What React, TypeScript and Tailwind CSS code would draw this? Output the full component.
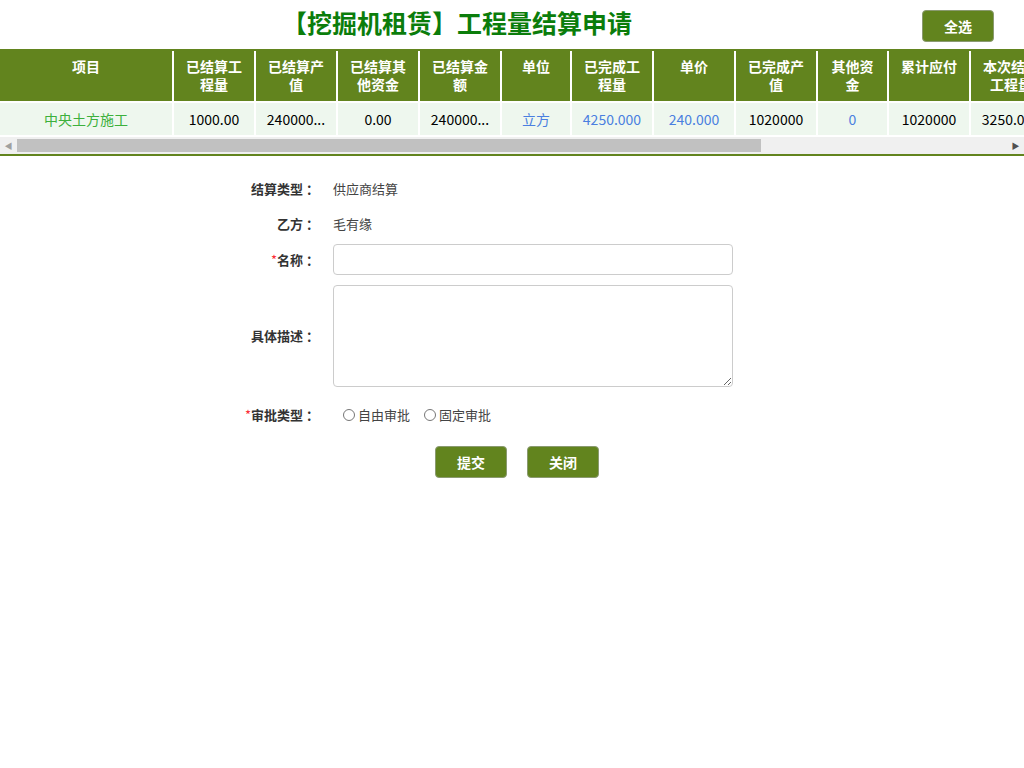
const cols: { h: string[]; w: number; v: string; c: string }[] = [
  { h: ["项目"], w: 172, v: "中央土方施工", c: "text-[#3cb03c]" },
  { h: ["已结算工", "程量"], w: 80, v: "1000.00", c: "text-black" },
  { h: ["已结算产", "值"], w: 80, v: "240000...", c: "text-black" },
  { h: ["已结算其", "他资金"], w: 80, v: "0.00", c: "text-black" },
  { h: ["已结算金", "额"], w: 80, v: "240000...", c: "text-black" },
  { h: ["单位"], w: 68, v: "立方", c: "text-[#4a7fe0]" },
  { h: ["已完成工", "程量"], w: 80, v: "4250.000", c: "text-[#4a7fe0]" },
  { h: ["单价"], w: 80, v: "240.000", c: "text-[#4a7fe0]" },
  { h: ["已完成产", "值"], w: 80, v: "1020000", c: "text-black" },
  { h: ["其他资", "金"], w: 69, v: "0", c: "text-[#4a7fe0]" },
  { h: ["累计应付"], w: 80, v: "1020000", c: "text-black" },
  { h: ["本次结算", "工程量"], w: 80, v: "3250.000", c: "text-black" },
  { h: ["本次结算", "产值"], w: 80, v: "780000", c: "text-black" },
];

const font = { fontFamily: '"Noto Sans CJK SC", "Liberation Sans", sans-serif' };
const total = cols.reduce((s, c) => s + c.w + 2, 0);

function Label({ req, text }: { req?: boolean; text: string }) {
  return (
    <div className="w-[101px] shrink-0 text-right text-[13px] font-bold text-[#333] pr-[14px]">
      {req && <span className="text-red-500 font-normal">*</span>}
      {text}&nbsp;：
    </div>
  );
}

export default function App() {
  return (
    <div className="w-[1024px] h-[768px] bg-white" style={font}>
      <div className="relative h-[49px] flex items-center justify-center">
        <h1 className="text-[25px] font-bold text-[#0b7d0b] -ml-[110px] mt-[-4px]">【挖掘机租赁】工程量结算申请</h1>
        <button className="absolute right-[30px] top-[10px] w-[72px] h-[32px] rounded-[4px] bg-[#62841e] border border-[#8a9a70] text-white font-bold text-[14px]">
          全选
        </button>
      </div>
      <div className="border-t-2 border-b-2 border-[#62841e]">
        <div className="overflow-hidden">
          <table className="table-fixed border-separate border-spacing-[2px] -ml-[2px] -mt-[2px]" style={{ width: total }}>
            <colgroup>
              {cols.map((c, i) => (
                <col key={i} style={{ width: c.w }} />
              ))}
            </colgroup>
            <thead>
              <tr>
                {cols.map((c, i) => (
                  <th
                    key={i}
                    className="h-[50px] bg-[#62841e] text-white text-[14px] font-bold leading-[18px] align-top pt-[6px] px-1 whitespace-nowrap"
                  >
                    {c.h.map((t, j) => (
                      <div key={j}>{t}</div>
                    ))}
                  </th>
                ))}
              </tr>
            </thead>
            <tbody>
              <tr>
                {cols.map((c, i) => (
                  <td key={i} className={`h-[32px] bg-[#eef7ee] text-center text-[14px] whitespace-nowrap ${c.c}`}>
                    {c.v}
                  </td>
                ))}
              </tr>
            </tbody>
          </table>
        </div>
        <div className="h-[17px] bg-[#f0f0f0] flex items-center">
          <span className="w-[17px] text-center text-[8px] text-[#a0a0a0]">◀</span>
          <div className="h-[13px] w-[744px] bg-[#c1c1c1]" />
          <div className="flex-1" />
          <span className="w-[17px] text-center text-[8px] text-[#505050]">▶</span>
        </div>
      </div>
      <div className="mt-[22px] ml-[232px] flex flex-col">
        <div className="flex items-center h-[22px]">
          <Label text="结算类型" />
          <span className="text-[13px] text-[#444]">供应商结算</span>
        </div>
        <div className="flex items-center h-[22px] mt-[13px]">
          <Label text="乙方" />
          <span className="text-[13px] text-[#444]">毛有缘</span>
        </div>
        <div className="flex items-center mt-[9px]">
          <Label req text="名称" />
          <input className="w-[400px] h-[31px] border border-[#ccc] rounded-[4px] outline-none" />
        </div>
        <div className="flex items-center mt-[10px]">
          <Label text="具体描述" />
          <textarea className="w-[400px] h-[102px] border border-[#ccc] rounded-[4px] outline-none" />
        </div>
        <div className="flex items-center mt-[17px] h-[22px]">
          <Label req text="审批类型" />
          <label className="ml-[10px] flex items-center text-[13px] text-[#444]">
            <input type="radio" name="t" className="m-0 mr-[3px] w-[12px] h-[12px]" />
            自由审批
          </label>
          <label className="ml-[14px] flex items-center text-[13px] text-[#444]">
            <input type="radio" name="t" className="m-0 mr-[3px] w-[12px] h-[12px]" />
            固定审批
          </label>
        </div>
        <div className="flex gap-[20px] ml-[203px] mt-[20px]">
          <button className="w-[72px] h-[32px] rounded-[4px] bg-[#62841e] border border-[#8a9a70] text-white font-bold text-[14px]">提交</button>
          <button className="w-[72px] h-[32px] rounded-[4px] bg-[#62841e] border border-[#8a9a70] text-white font-bold text-[14px]">关闭</button>
        </div>
      </div>
    </div>
  );
}
